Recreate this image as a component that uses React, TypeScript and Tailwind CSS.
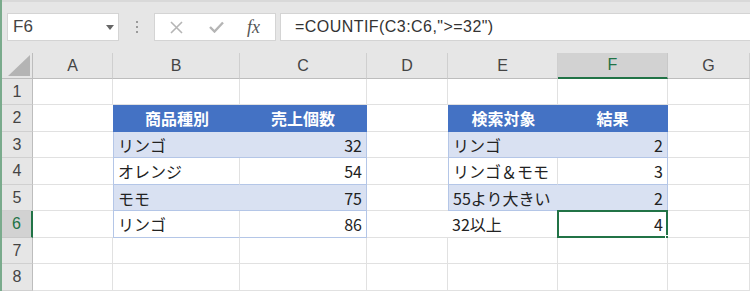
import React from "react";

const FONT = { fontFamily: '"Noto Sans CJK JP", "Noto Sans", sans-serif' };
const UI = { fontFamily: '"Liberation Sans", Arial, sans-serif' };

const G = "border-r border-b border-[#e1e1e1] bg-white";
const HDR_L = "justify-center bg-[#4472c4] text-white font-bold border-l border-b border-[#4472c4]";
const HDR_R = "justify-center bg-[#4472c4] text-white font-bold border-r border-b border-[#4472c4]";
const BAND_L = "pl-[4px] bg-[#d9e1f2] border-l border-b border-[#b4c6e7]";
const BAND_R = "justify-end pr-[4px] bg-[#d9e1f2] border-r border-b border-[#b4c6e7]";
const WHITE_L = "pl-[4px] bg-white border-l border-b border-r border-[#b4c6e7] border-r-[#e1e1e1]";
const WHITE_R = "justify-end pr-[4px] bg-white border-r border-b border-[#b4c6e7]";
const BEFORE = "border-b border-[#e1e1e1] bg-white";

function Cell({ className, children }: { className: string; children?: React.ReactNode }) {
  return (
    <div className={"relative flex items-center overflow-visible whitespace-nowrap text-[16px] text-[#222] " + className}>
      {children}
    </div>
  );
}

function RowHead({ n, selected }: { n: number; selected?: boolean }) {
  return selected ? (
    <div className="flex items-center justify-center bg-[#d2d2d2] border-b border-[#c8c8c8] border-r-2 border-r-[#217346] text-[16px] text-[#217346]" style={UI}>
      {n}
    </div>
  ) : (
    <div className="flex items-center justify-center bg-[#e6e6e6] border-b border-[#d0d0d0] border-r border-r-[#bdbdbd] text-[16px] text-[#444]" style={UI}>
      {n}
    </div>
  );
}

function ColHead({ l, selected }: { l: string; selected?: boolean }) {
  return selected ? (
    <div className="flex items-center justify-center bg-[#d2d2d2] border-r border-[#c8c8c8] border-b-2 border-b-[#217346] text-[16px] text-[#217346]" style={UI}>
      {l}
    </div>
  ) : (
    <div className="flex items-center justify-center bg-[#e6e6e6] border-r border-[#cfcfcf] border-b border-b-[#bdbdbd] text-[16px] text-[#444]" style={UI}>
      {l}
    </div>
  );
}

export default function App() {
  return (
    <div className="flex w-[750px] h-[291px] overflow-hidden bg-[#e6e6e6]">
      <div className="w-[2px] bg-[#7aab8c] shrink-0" />
      <div className="flex flex-col w-[748px]">
        {/* formula bar */}
        <div className="h-[53px] flex items-start pt-[13px] border-t-2 border-[#d9d9d9] bg-[#e6e6e6]">
          <div className="ml-[5px] w-[112px] h-[28px] mt-[-2px] bg-white border border-[#d4d4d4] flex items-center justify-between pl-[5px] pr-[4px]">
            <span className="text-[17px] text-[#444]" style={UI}>F6</span>
            <svg width="8" height="5" viewBox="0 0 8 5"><polygon points="0,0 8,0 4,5" fill="#666" /></svg>
          </div>
          <div className="w-[35px] h-[28px] mt-[-2px] flex flex-col items-center justify-center gap-[3px]">
            <div className="w-[2px] h-[2px] bg-[#9a9a9a]" />
            <div className="w-[2px] h-[2px] bg-[#9a9a9a]" />
            <div className="w-[2px] h-[2px] bg-[#9a9a9a]" />
          </div>
          <div className="w-[122px] h-[28px] mt-[-2px] bg-white border border-[#d4d4d4] flex items-center">
            <svg className="ml-[15px]" width="13" height="13" viewBox="0 0 13 13"><path d="M1 1 L12 12 M12 1 L1 12" stroke="#b5b5b5" strokeWidth="1.6" fill="none" /></svg>
            <svg className="ml-[26px]" width="15" height="12" viewBox="0 0 15 12"><path d="M1 6 L5.5 10.5 L14 1.5" stroke="#b5b5b5" strokeWidth="2.4" fill="none" /></svg>
            <span className="ml-[23px] text-[18px] italic text-[#555] leading-none" style={{ fontFamily: '"Liberation Serif", "DejaVu Serif", serif' }}>fx</span>
          </div>
          <div className="ml-[4px] flex-1 h-[28px] mt-[-2px] bg-white border border-[#d4d4d4] border-r-0 flex items-center pl-[14px]">
            <span className="text-[16px] tracking-[0.45px] text-[#333]" style={UI}>=COUNTIF(C3:C6,"&gt;=32")</span>
          </div>
        </div>

        {/* grid */}
        <div
          className="grid grid-cols-[31px_80px_127px_127px_81px_110px_110px_82px] grid-rows-[26px_26px_27px_26px_27px_26px_27px_26px_27px]"
          style={FONT}
        >
          {/* column headers */}
          <div className="relative bg-[#e6e6e6] border-r border-b border-[#bdbdbd]">
            <svg className="absolute right-[2px] bottom-[2px]" width="22" height="21" viewBox="0 0 22 21"><polygon points="22,0 22,21 0,21" fill="#b4b4b4" /></svg>
          </div>
          <ColHead l="A" />
          <ColHead l="B" />
          <ColHead l="C" />
          <ColHead l="D" />
          <ColHead l="E" />
          <ColHead l="F" selected />
          <ColHead l="G" />

          {/* row 1 */}
          <RowHead n={1} />
          <Cell className={G} />
          <Cell className={G} />
          <Cell className={G} />
          <Cell className={G} />
          <Cell className={G} />
          <Cell className={G} />
          <Cell className={G} />

          {/* row 2 */}
          <RowHead n={2} />
          <Cell className={BEFORE} />
          <Cell className={HDR_L}>商品種別</Cell>
          <Cell className={HDR_R}>売上個数</Cell>
          <Cell className={BEFORE} />
          <Cell className={HDR_L}>検索対象</Cell>
          <Cell className={HDR_R}>結果</Cell>
          <Cell className={G} />

          {/* row 3 */}
          <RowHead n={3} />
          <Cell className={BEFORE} />
          <Cell className={BAND_L}>リンゴ</Cell>
          <Cell className={BAND_R}>32</Cell>
          <Cell className={BEFORE} />
          <Cell className={BAND_L}>リンゴ</Cell>
          <Cell className={BAND_R}>2</Cell>
          <Cell className={G} />

          {/* row 4 */}
          <RowHead n={4} />
          <Cell className={BEFORE} />
          <Cell className={WHITE_L}>オレンジ</Cell>
          <Cell className={WHITE_R}>54</Cell>
          <Cell className={BEFORE} />
          <Cell className={WHITE_L}>リンゴ＆モモ</Cell>
          <Cell className={WHITE_R}>3</Cell>
          <Cell className={G} />

          {/* row 5 */}
          <RowHead n={5} />
          <Cell className={BEFORE} />
          <Cell className={BAND_L}>モモ</Cell>
          <Cell className={BAND_R}>75</Cell>
          <Cell className={BEFORE} />
          <Cell className={BAND_L}>55より大きい</Cell>
          <Cell className={BAND_R}>2</Cell>
          <Cell className={G} />

          {/* row 6 */}
          <RowHead n={6} selected />
          <Cell className={BEFORE} />
          <Cell className={WHITE_L}>リンゴ</Cell>
          <Cell className={WHITE_R}>86</Cell>
          <Cell className={BEFORE} />
          <Cell className="pl-[4px] bg-white border-r border-b border-[#e1e1e1]">32以上</Cell>
          <Cell className="justify-end pr-[4px] bg-white border-r border-b border-[#e1e1e1]">
            4
            <div className="absolute -left-[1px] -top-[1px] -right-[1px] -bottom-[1px] border-2 border-[#217346] pointer-events-none" />
            <div className="absolute -right-[3px] -bottom-[3px] w-[5px] h-[5px] bg-[#217346] border border-white" />
          </Cell>
          <Cell className={G} />

          {/* row 7 */}
          <RowHead n={7} />
          <Cell className={G} />
          <Cell className={G} />
          <Cell className={G} />
          <Cell className={G} />
          <Cell className={G} />
          <Cell className={G} />
          <Cell className={G} />

          {/* row 8 */}
          <RowHead n={8} />
          <Cell className={G} />
          <Cell className={G} />
          <Cell className={G} />
          <Cell className={G} />
          <Cell className={G} />
          <Cell className={G} />
          <Cell className={G} />
        </div>
      </div>
    </div>
  );
}
